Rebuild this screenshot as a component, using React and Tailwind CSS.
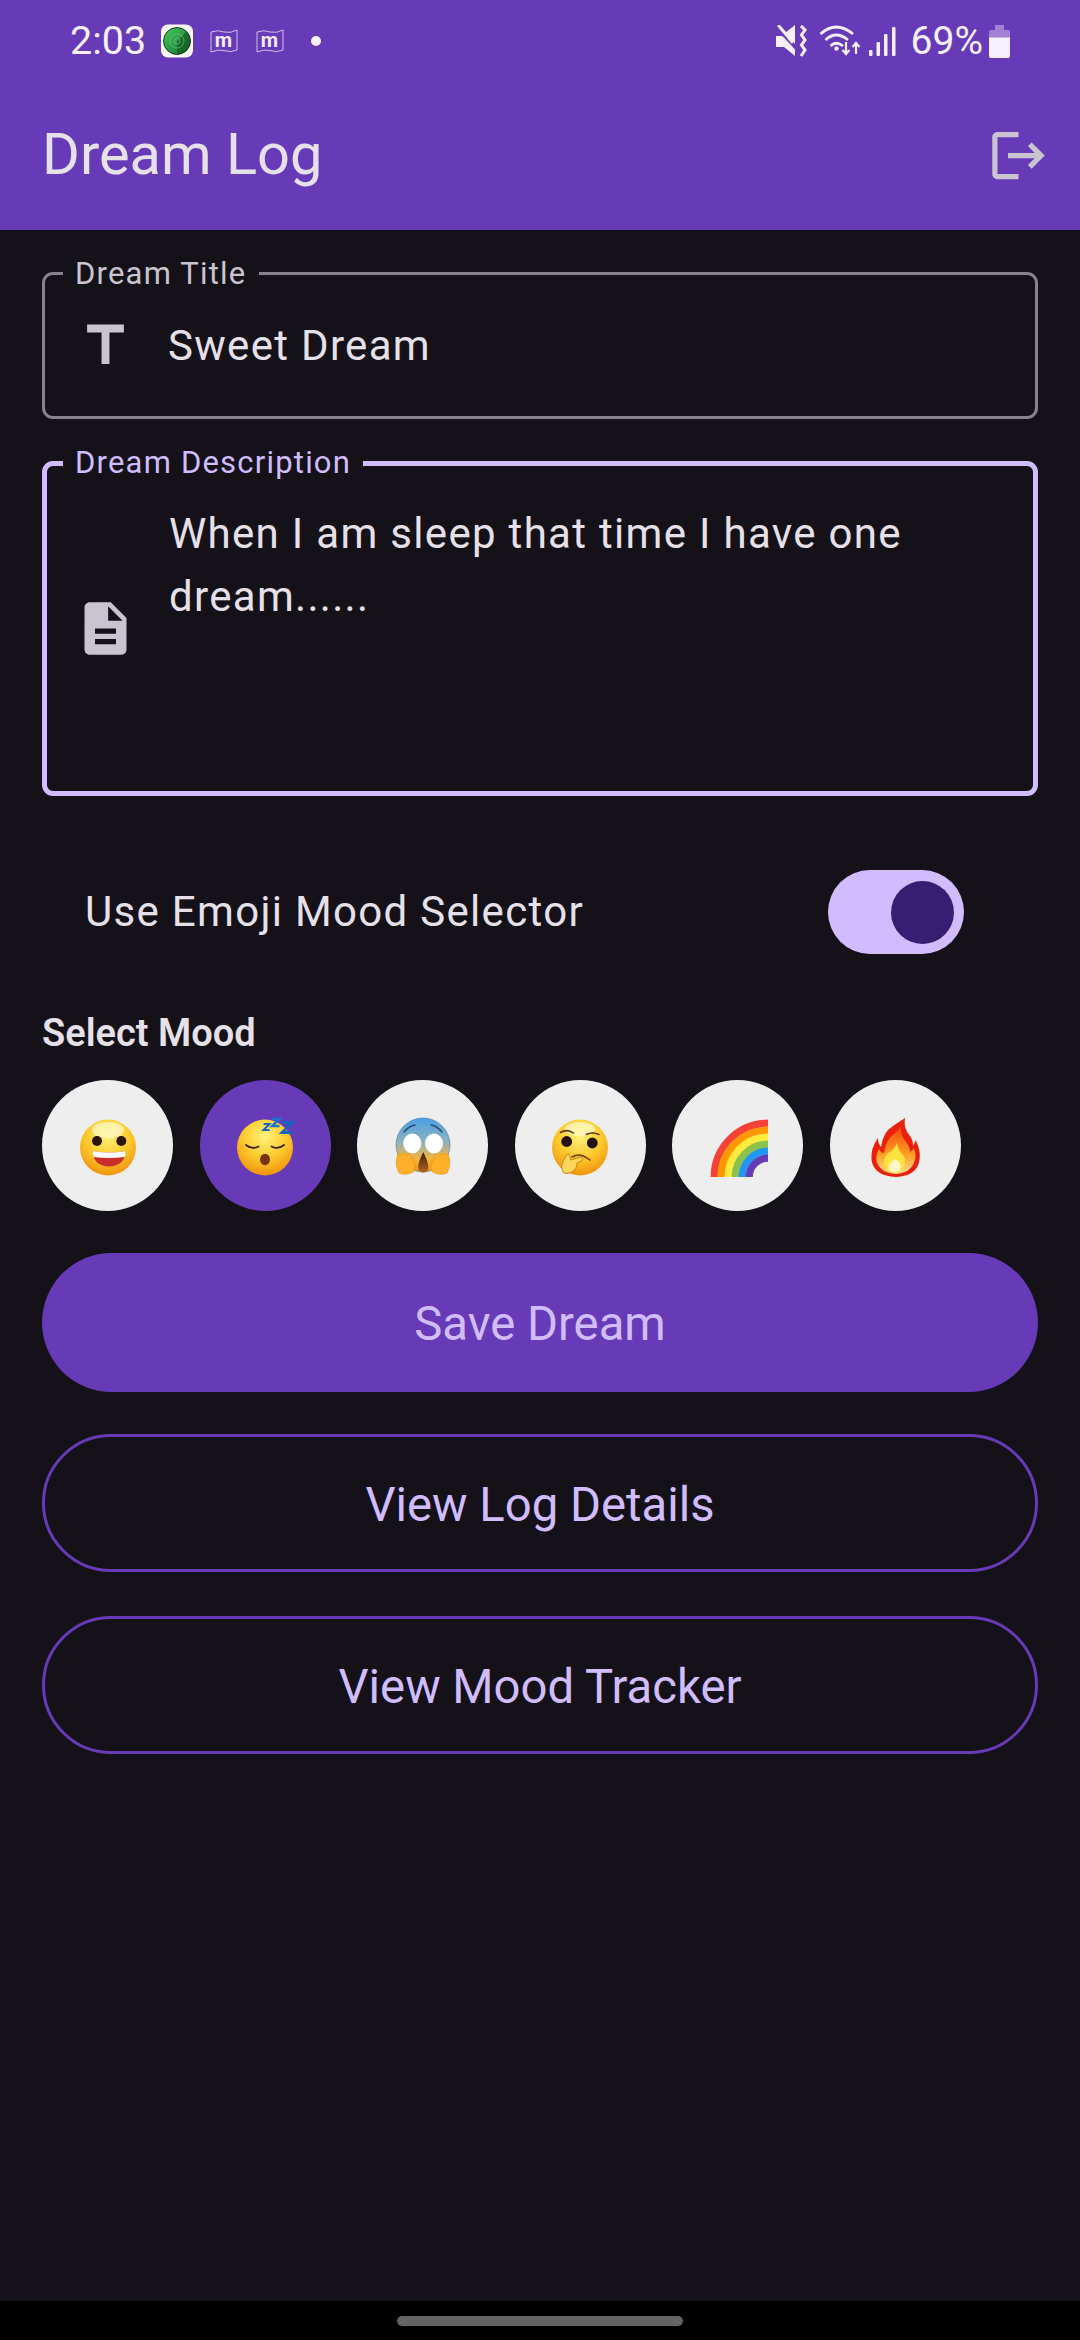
const moods = ["grin", "sleep", "scream", "think", "rainbow", "fire"];

function Face({ id, children }) {
  return (
    <>
      <defs>
        <radialGradient id={id} cx="50%" cy="30%" r="72%">
          <stop offset="0%" stopColor="#fff27a" />
          <stop offset="55%" stopColor="#fdc92c" />
          <stop offset="100%" stopColor="#ef8f0c" />
        </radialGradient>
      </defs>
      <circle cx="32" cy="33.5" r="28" fill={`url(#${id})`} />
      {children}
    </>
  );
}

function MoodEmoji({ name }) {
  return (
    <svg width="64" height="64" viewBox="0 0 64 64" className="overflow-visible">
      {name === "grin" && (
        <Face id="faceGrin">
          <ellipse cx="32" cy="16" rx="16" ry="8" fill="#fffbd0" opacity="0.7" />
          <circle cx="21" cy="27" r="5" fill="#2b1408" />
          <circle cx="45.3" cy="27" r="5" fill="#2b1408" />
          <path d="M17 37 Q33 40 49.5 37 Q49 52 33 52.5 Q17 52 17 37Z" fill="#c9302c" />
          <path d="M17 37 Q33 40 49.5 37 Q49.8 41 48.5 43 Q33 45 18 43 Q16.6 41 17 37Z" fill="#fff" />
        </Face>
      )}
      {name === "sleep" && (
        <Face id="faceSleep">
          <path d="M13 31 Q19 36 25.5 32.5" fill="none" stroke="#40220a" strokeWidth="1.8" strokeLinecap="round" />
          <path d="M38.5 32.5 Q45 36 51 31" fill="none" stroke="#40220a" strokeWidth="1.8" strokeLinecap="round" />
          <ellipse cx="32" cy="45.5" rx="5" ry="5.8" fill="#7a3208" />
          <path d="M30.5 10 H36.5 L30.5 16 H36.5" fill="none" stroke="#1565c0" strokeWidth="2" />
          <path d="M39 5 H46.5 L39 12 H46.5" fill="none" stroke="#1976d2" strokeWidth="2.4" />
          <path d="M49 8.5 H59.5 L49 18.5 H59.5" fill="none" stroke="#1565c0" strokeWidth="2.8" />
        </Face>
      )}
      {name === "scream" && (
        <>
          <defs>
            <linearGradient id="faceScream" x1="0" y1="0" x2="0" y2="1">
              <stop offset="0%" stopColor="#4a9fe8" />
              <stop offset="45%" stopColor="#8fb3b8" />
              <stop offset="75%" stopColor="#f3b540" />
              <stop offset="100%" stopColor="#ef9a14" />
            </linearGradient>
            <linearGradient id="screamMouth" x1="0" y1="0" x2="0" y2="1">
              <stop offset="0%" stopColor="#3a1c0c" />
              <stop offset="100%" stopColor="#b5651d" />
            </linearGradient>
          </defs>
          <circle cx="32" cy="31" r="27" fill="url(#faceScream)" stroke="#3f78b5" strokeWidth="0.6" />
          <path d="M13 18 Q18 12 24 11" fill="none" stroke="#2c4a6a" strokeWidth="1.4" strokeLinecap="round" />
          <path d="M51 18 Q46 12 40 11" fill="none" stroke="#2c4a6a" strokeWidth="1.4" strokeLinecap="round" />
          <ellipse cx="21.3" cy="29.5" rx="9" ry="10" fill="#fff" />
          <ellipse cx="43" cy="29.5" rx="9" ry="10" fill="#fff" />
          <path d="M32.3 38 Q38.5 50 37 56 Q32.3 61 27.5 56 Q26 50 32.3 38Z" fill="url(#screamMouth)" />
          <path d="M7 40 L10 41 L12 38.5 L15 42 L19 39 L21 44 Q26 52 22.5 58 Q14 62 8 59 Q3 50 7 40Z" fill="#fbb12a" stroke="#e98e10" strokeWidth="0.6" />
          <path d="M57 40 L54 41 L52 38.5 L49 42 L45 39 L43 44 Q38 52 41.5 58 Q50 62 56 59 Q61 50 57 40Z" fill="#fbb12a" stroke="#e98e10" strokeWidth="0.6" />
        </>
      )}
      {name === "think" && (
        <Face id="faceThink">
          <ellipse cx="32" cy="15" rx="15" ry="7" fill="#fffbd0" opacity="0.7" />
          <path d="M12.5 18.5 Q19 14.5 25.5 19" fill="none" stroke="#5c3208" strokeWidth="1.5" strokeLinecap="round" />
          <path d="M38.5 20.5 Q44 17.5 51 20.5" fill="none" stroke="#5c3208" strokeWidth="1.5" strokeLinecap="round" />
          <circle cx="18.7" cy="27.5" r="5.4" fill="#24120a" />
          <circle cx="44.3" cy="29" r="5.4" fill="#24120a" />
          <path d="M24 43 Q32 38 42 46" fill="none" stroke="#7a4208" strokeWidth="1.6" strokeLinecap="round" />
          <path d="M18 41 L20.5 40 Q23 43 22.5 46 L33 43 Q36 44 34 46.5 L29 49 Q29 55 24 58 Q19 61 15 58.5 Q12 52 15 47 Q17 45 18 41Z" fill="#ffd65e" stroke="#c67a10" strokeWidth="0.9" />
        </Face>
      )}
      {name === "rainbow" &&
        ["#f44336", "#ff9800", "#ffeb3b", "#8bc34a", "#2196f3", "#673ab7"].map((color, i) => {
          const r = 53.8 - 7 * i;
          return (
            <path
              key={color}
              d={`M${62 - r} 63 A${r} ${r} 0 0 1 62 ${63 - r}`}
              fill="none"
              stroke={color}
              strokeWidth="7.2"
            />
          );
        })}
      {name === "fire" && (
        <>
          <defs>
            <linearGradient id="fireMid" x1="0" y1="0" x2="0" y2="1">
              <stop offset="0%" stopColor="#f4490f" />
              <stop offset="55%" stopColor="#ff9a1e" />
              <stop offset="100%" stopColor="#ffd98a" />
            </linearGradient>
          </defs>
          <path d="M42 4 Q40 14 47 22 Q50 26 50 32 Q52 29 52.5 26 Q58 36 56.5 46 Q54 62 33 63 Q11 62 8.5 46 Q7.5 34 15 24 Q15 30 18 33 Q20 18 30 12 Q36 8 42 4Z" fill="#e8200c" />
          <path d="M38 13 Q37 21 43 28 Q47 33 47 38 Q50 36 51 34 Q54 42 51 49 Q47 59 33 60 Q18 59 14 49 Q12 41 16 35 Q18 39 21 39 Q23 25 31 20 Q35 17 38 13Z" fill="url(#fireMid)" />
          <path d="M34 29 Q35 36 40 41 Q44 47 41 53 Q38 59 32 59 Q23 58 21 51 Q20 45 25 39 Q31 36 34 29Z" fill="#ffe23d" />
          <path d="M32 45 Q38 48 38 53 Q37 58 32 58.5 Q26 58 25.5 53 Q26 49 32 45Z" fill="#fff6c8" />
        </>
      )}
    </svg>
  );
}

function FlagM() {
  return (
    <svg width="28" height="25" viewBox="0 0 28 25">
      <path d="M1 3 Q8 0.5 14 3 Q21 4.5 27 1 V21 Q21 24 14 21.5 Q8 20 1 23Z" fill="none" stroke="#e8e0f5" strokeWidth="0.8" />
      <text x="13.5" y="18" textAnchor="middle" fontFamily="Roboto" fontWeight="700" fontSize="20" fill="#f3eefa">m</text>
    </svg>
  );
}

function StatusBar() {
  return (
    <div className="h-[78px] flex items-center justify-between pl-[70px] pr-[70px] text-[#f5f0fb] text-[39.5px] pt-[4px]">
      <div className="flex items-center">
        <span className="w-[91px] leading-none">2:03</span>
        <svg width="32" height="34" viewBox="0 0 32 33">
          <defs>
            <linearGradient id="radar" x1="0" y1="0" x2="1" y2="1">
              <stop offset="0%" stopColor="#45c95f" />
              <stop offset="100%" stopColor="#17702c" />
            </linearGradient>
          </defs>
          <rect width="32" height="33" rx="7" fill="#f8f8f8" />
          <circle cx="16" cy="16.5" r="13.5" fill="url(#radar)" stroke="#0b2a12" strokeWidth="0.9" />
          <path d="M16 16.5 L25.5 7 A13.5 13.5 0 0 1 16 30Z" fill="#0f4a1e" opacity="0.55" />
          <circle cx="16" cy="16.5" r="7" fill="none" stroke="#7fd98f" strokeWidth="0.5" />
          <circle cx="16" cy="16.5" r="3" fill="none" stroke="#7fd98f" strokeWidth="0.5" />
        </svg>
        <div className="ml-[17px] flex gap-[18px]">
          <FlagM />
          <FlagM />
        </div>
        <span className="ml-[27px] w-[10px] h-[10px] rounded-full bg-[#f5f0fb]" />
      </div>
      <div className="flex items-center">
        <svg width="32" height="32" viewBox="0 0 32 32" fill="#f5f0fb">
          <path d="M1 11 H7 L9 12.5 L20 24.5 V31 L9 22 H1Z" />
          <path d="M10 8 L20 0 V19Z" />
          <path d="M2 1 L4.5 -0.5 L19 16 L17 19Z" />
          <path d="M26 1 L30 5 L26.5 10 L30 15 L26.5 20 L30 25 L26 31" fill="none" stroke="#f5f0fb" strokeWidth="3" />
        </svg>
        <svg width="44" height="32" viewBox="0 0 44 32" className="ml-[12px]" fill="none" stroke="#f5f0fb" strokeWidth="2.8">
          <path d="M1.5 9 Q17 -5 34 9" />
          <path d="M6.5 15 Q17 5 29 15" />
          <path d="M11.5 21 Q17 15.5 24 21" />
          <circle cx="17.5" cy="23.5" r="2.2" fill="#f5f0fb" stroke="none" />
          <path d="M27 17 V28 M23.5 25 L27 29 L30.5 25" strokeWidth="2.2" />
          <path d="M37 29 V19 M33.5 22 L37 18 L40.5 22" strokeWidth="2.2" />
        </svg>
        <svg width="28" height="30" viewBox="0 0 28 30" className="ml-[6px]" fill="#f5f0fb">
          <rect x="0" y="24" width="3.5" height="6" rx="1" />
          <rect x="7.5" y="16" width="3.5" height="14" rx="1" />
          <rect x="15" y="8" width="3.5" height="22" rx="1" />
          <rect x="23" y="1" width="3.5" height="29" rx="1" />
        </svg>
        <span className="ml-[14px] text-[39px] leading-none">69%</span>
        <svg width="21" height="33" viewBox="0 0 21 33" className="ml-[6px]">
          <path d="M6 0 H15 V5 H19 Q21 5 21 7 V14 H0 V7 Q0 5 2 5 H6Z" fill="#a380d3" />
          <path d="M0 12.5 H21 V31 Q21 33 19 33 H2 Q0 33 0 31Z" fill="#f5f0fb" />
        </svg>
      </div>
    </div>
  );
}

function Field({ label, active, className, icon, children }) {
  return (
    <div className={`relative flex rounded-[11px] ${active ? "border-[5px] border-[#d0bcff]" : "border-[3px] border-[#87838d]"} ${className}`}>
      <span
        className={`absolute -translate-y-1/2 px-[12px] bg-[#141218] text-[31px] leading-none tracking-[1.2px] ${active ? "-top-[4px] left-[16px] text-[#d0bcff]" : "-top-[2px] left-[18px] text-[#cac4d0]"}`}
      >
        {label}
      </span>
      <div className={`shrink-0 flex items-center justify-center text-[#cac4d0] ${active ? "w-[116px] mr-[6px]" : "w-[120px] mr-[3px]"}`}>{icon}</div>
      {children}
    </div>
  );
}

export default function App() {
  return (
    <div className="w-[1080px] h-[2340px] flex flex-col bg-[#141218] font-['Roboto',sans-serif]">
      <div className="bg-[#673ab7] h-[230px]">
        <StatusBar />
        <div className="h-[152px] flex items-center justify-between pl-[42px] pr-[30px] pt-[2px]">
          <h1 className="text-[57.75px] leading-none text-[#e6e0e9]">Dream Log</h1>
          <svg width="63" height="63" viewBox="0 0 24 24" fill="#cac4d0">
            <path d="M17 7l-1.41 1.41L18.17 11H8v2h10.17l-2.58 2.58L17 17l5-5zM4 5h8V3H4c-1.1 0-2 .9-2 2v14c0 1.1.9 2 2 2h8v-2H4V5z" />
          </svg>
        </div>
      </div>

      <main className="flex-1 px-[42px] pt-[42px] flex flex-col">
        <Field
          label="Dream Title"
          className="h-[147px] items-center"
          icon={
            <svg width="63" height="63" viewBox="0 0 24 24" fill="currentColor">
              <path d="M5 4v3h5.5v12h3V7H19V4z" />
            </svg>
          }
        >
          <span className="text-[42px] leading-[63px] tracking-[1.31px] text-[#e6e0e9]">Sweet Dream</span>
        </Field>

        <Field
          label="Dream Description"
          active
          className="h-[335px] mt-[42px]"
          icon={
            <svg width="63" height="63" viewBox="0 0 24 24" fill="currentColor">
              <path d="M14 2H6c-1.1 0-1.99.9-1.99 2L4 20c0 1.1.89 2 1.99 2H18c1.1 0 2-.9 2-2V8l-6-6zm2 16H8v-2h8v2zm0-4H8v-2h8v2zm-3-5V3.5L18.5 9H13z" />
            </svg>
          }
        >
          <p className="pt-[36px] pr-[80px] text-[42px] leading-[63px] tracking-[1.31px] text-[#e6e0e9]">
            When I am sleep that time I have one dream......
          </p>
        </Field>

        <div className="mt-[74px] h-[84px] flex items-center justify-between pl-[43px] pr-[74px]">
          <span className="text-[42px] leading-none tracking-[1.31px] text-[#e6e0e9]">Use Emoji Mood Selector</span>
          <div className="w-[136px] h-[84px] rounded-full bg-[#d0bcff] flex items-center justify-end pr-[10px]">
            <div className="w-[63px] h-[63px] rounded-full bg-[#381e72]" />
          </div>
        </div>

        <h2 className="mt-[57px] mb-[25px] text-[38px] leading-[44px] font-semibold text-[#e6e0e9]">Select Mood</h2>

        <div className="flex gap-[26.5px]">
          {moods.map((mood) => (
            <div
              key={mood}
              className={`w-[131px] h-[131px] rounded-full flex items-center justify-center ${mood === "sleep" ? "bg-[#673ab7]" : "bg-[#eeeeee]"}`}
            >
              <MoodEmoji name={mood} />
            </div>
          ))}
        </div>

        <button className="mt-[42px] h-[139px] pt-[4px] rounded-full bg-[#673ab7] text-[47.25px] text-[#d0bcff]">Save Dream</button>
        <button className="mt-[42px] h-[138px] pt-[4px] rounded-full border-[3px] border-[#673ab7] text-[47.25px] text-[#d0bcff]">View Log Details</button>
        <button className="mt-[44px] h-[138px] pt-[4px] rounded-full border-[3px] border-[#673ab7] text-[47.25px] text-[#d0bcff]">View Mood Tracker</button>
      </main>

      <div className="h-[39px] bg-black flex items-center justify-center">
        <div className="w-[286px] h-[10px] rounded-full bg-[#636363]" />
      </div>
    </div>
  );
}
